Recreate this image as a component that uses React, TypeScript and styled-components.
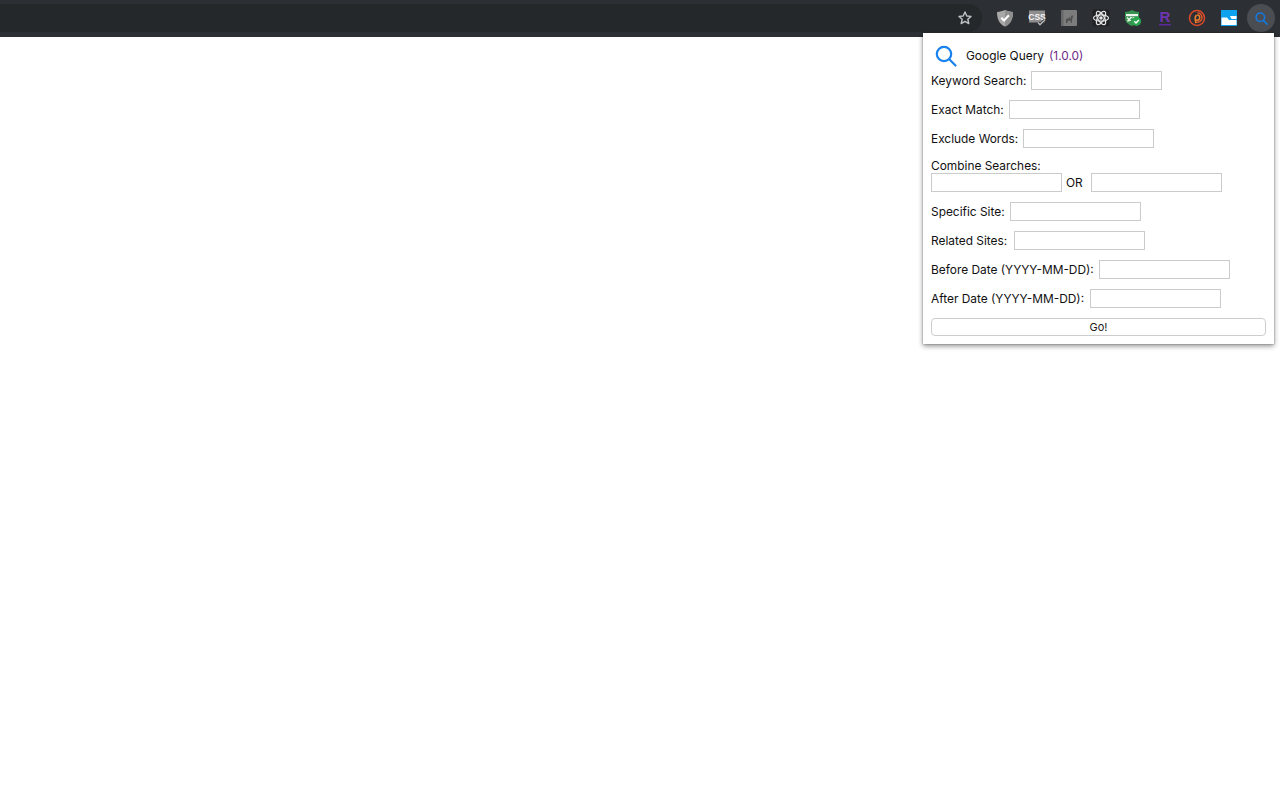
import React from "react";
import styled, { createGlobalStyle } from "styled-components";

const Global = createGlobalStyle`
  html, body { margin: 0; padding: 0; background: #fff; height: 100%; }
  #root { min-height: 100%; }
`;
const Page = styled.div`
  position: relative;
  width: 1280px;
  height: 800px;
  overflow: hidden;
  background: #fff;
  font-family: "Inter", "Liberation Sans", sans-serif;
`;
const Toolbar = styled.div`
  display: flex;
  align-items: center;
  height: 37px;
  box-sizing: border-box;
  padding: 4px 5px 5px 0;
  background: #2c2f33;
`;
const Omnibox = styled.div`
  flex: 1;
  height: 28px;
  margin-right: 9px;
  padding-right: 9px;
  display: flex;
  align-items: center;
  justify-content: flex-end;
  background: #24282b;
  border-radius: 0 14px 14px 0;
`;
const Icons = styled.div`
  display: flex;
  gap: 4px;
`;
const IconButton = styled.div<{ $active?: boolean }>`
  width: 28px;
  height: 28px;
  border-radius: 50%;
  display: flex;
  align-items: center;
  justify-content: center;
  background: ${(p) => (p.$active ? "#4a4d51" : "transparent")};
`;
const Popup = styled.div`
  position: absolute;
  left: 923px;
  top: 33px;
  width: 351px;
  height: 311px;
  box-sizing: border-box;
  padding: 12px 8px 8px;
  background: #fff;
  box-shadow: 0 0 1px rgba(0, 0, 0, 0.5), 0 2px 5px rgba(0, 0, 0, 0.45);
  color: #111;
  font-size: 11.9px;
`;
const Header = styled.div`
  display: flex;
  align-items: center;
  height: 22px;
  margin-bottom: 4px;
  padding-left: 4px;
`;
const Title = styled.span`
  margin-left: 9px;
  margin-top: -1px;
  width: 78px;
  white-space: nowrap;
`;
const Version = styled.span`
  margin-left: 5px;
  margin-top: -1px;
  color: #6f2a87;
`;
const Row = styled.div`
  display: flex;
  align-items: center;
  gap: 5px;
  height: 19px;
  margin-bottom: 10px;
`;
const StackLabel = styled.div`
  height: 15px;
  line-height: 15px;
`;
const Label = styled.label<{ $w: number }>`
  width: ${(p) => p.$w}px;
  white-space: nowrap;
`;
const Field = styled.input`
  box-sizing: border-box;
  width: 131px;
  height: 19px;
  padding: 0 2px;
  margin: 0;
  border: 1px solid #cbcbcb;
  border-radius: 0;
  background: #fff;
  outline: none;
`;
const Or = styled.span`
  width: 17px;
  margin: 0 3px 0 -1px;
`;
const Go = styled.button`
  display: block;
  width: 335px;
  height: 18px;
  padding: 0;
  box-sizing: border-box;
  border: 1px solid #cdcdcd;
  border-radius: 4px;
  background: #fff;
  color: #222;
  font-family: inherit;
  font-size: 11px;
  line-height: 16px;
`;

const Star = () => (
  <svg width="16" height="16" viewBox="0 0 24 24" fill="none" stroke="#bfc2c6" strokeWidth="2.100" strokeLinejoin="round">
    <path d="M12 3l2.700 6 6.300.6-4.800 4.300 1.500 6.400L12 17l-5.700 3.300 1.500-6.400L3 9.600 9.300 9z" />
  </svg>
);
const Shield = () => (
  <svg width="18" height="18" viewBox="0 0 18 18">
    <path d="M9 1c2.500 1.200 5.200 1.800 8 1.900 0 6.500-1.800 11.600-8 14.600C2.800 14.500 1 9.400 1 2.900 3.800 2.800 6.500 2.200 9 1z" fill="#a8a8a8" />
    <path d="M9 1c2.500 1.200 5.200 1.800 8 1.900 0 6.500-1.800 11.600-8 14.600z" fill="#8f8f8f" />
    <path d="M5.300 8.800l2.700 2.700 4.900-5.200" fill="none" stroke="#fff" strokeWidth="2" />
  </svg>
);
const CssIcon = () => (
  <svg width="18" height="18" viewBox="0 0 18 18">
    <rect x="1" y="1.500" width="16" height="12" fill="#8e8e8e" />
    <text x="9" y="10.800" textAnchor="middle" fontSize="8.500" fontWeight="700" fontFamily="Liberation Sans" fill="#f4f4f4">CSS</text>
    <path d="M10 13.500l2 2.200 5-5" fill="none" stroke="#2c2f33" strokeWidth="2.800" />
    <path d="M10 13.500l2 2.200 5-5" fill="none" stroke="#bdbdbd" strokeWidth="1.400" />
  </svg>
);
const CamelBook = () => (
  <svg width="18" height="18" viewBox="0 0 18 18">
    <rect x="1" y="1" width="16" height="16" rx="1" fill="#7c7c7c" />
    <rect x="1" y="1" width="2.500" height="16" fill="#686868" />
    <path d="M6 14v-3.500l1.200-1.600 1 1.300 1-2.400 1.300 2 .6-3 2.400-.2-.9 1.800-.7 3.400V14h-1l-.2-2.300H7.600V14z" fill="#505050" />
  </svg>
);
const Atom = () => (
  <svg width="18" height="18" viewBox="0 0 18 18">
    <rect x="0.500" y="0.500" width="17" height="17" rx="2" fill="#202326" />
    <g fill="none" stroke="#e4e4e4" strokeWidth="1.200">
      <ellipse cx="9" cy="9" rx="7.500" ry="3.200" />
      <ellipse cx="9" cy="9" rx="7.500" ry="3.200" transform="rotate(60 9 9)" />
      <ellipse cx="9" cy="9" rx="7.500" ry="3.200" transform="rotate(120 9 9)" />
    </g>
    <circle cx="9" cy="9" r="1.800" fill="#e4e4e4" />
  </svg>
);
const GreenBadge = () => (
  <svg width="18" height="18" viewBox="0 0 18 18">
    <path d="M1 3c2.500 0 5-.7 7-2 2 1.300 4.500 2 7 2v6c0 4-3 6.500-7 8-4-1.500-7-4-7-8z" fill="#37914f" />
    <rect x="2" y="5" width="12" height="2.200" fill="#eef5ee" />
    <path d="M3 8.500l3.500 3.500M7.500 8l-4 4.500M8.500 8.500l2.500.8" stroke="#e6f1e6" strokeWidth="1.700" fill="none" />
    <circle cx="12.500" cy="12.300" r="4.600" fill="#2aa650" />
    <path d="M10.300 12.300l1.700 1.700 2.800-3" fill="none" stroke="#fff" strokeWidth="1.400" />
  </svg>
);
const RIcon = () => (
  <svg width="18" height="18" viewBox="0 0 18 18">
    <text x="9" y="13" textAnchor="middle" fontSize="15" fontWeight="700" fontFamily="Liberation Sans" fill="#6f35b0">R</text>
    <rect x="3" y="15" width="12" height="1.500" fill="#5a2a9c" />
  </svg>
);
const Spiral = () => (
  <svg width="18" height="18" viewBox="0 0 18 18" fill="none" strokeWidth="1.500" strokeLinecap="round">
    <circle cx="9" cy="9" r="7.500" stroke="#dc4a2a" />
    <path d="M10 3.800c3.200.6 4.500 3.500 3.800 6-.8 2.500-3.400 4-5.600 3.300" stroke="#e0552a" />
    <path d="M9.500 6c2 .2 2.600 2.200 2 3.700-.5 1.300-1.800 1.800-2.800 1.200M8 6.500C6.800 8.500 7 11 7.800 13.500" stroke="#f0812d" />
  </svg>
);
const FolderTile = () => (
  <svg width="18" height="18" viewBox="0 0 18 18">
    <rect x="1" y="1" width="16" height="16" fill="#0ca2ee" />
    <path d="M1.500 16V8.500H7l2 2.500h7.500v5z" fill="#fff" />
    <path d="M10 7h6.500v3h-5z" fill="#fff" />
  </svg>
);
const SearchIcon = ({ size, stroke, width }: { size: number; stroke: string; width: number }) => (
  <svg width={size} height={size} viewBox="0 0 22 22" fill="none" stroke={stroke} strokeWidth={width} strokeLinecap="round">
    <circle cx="9" cy="9" r="7.200" />
    <path d="M14.300 14.300L20.500 20.500" />
  </svg>
);

const upper: [string, number][] = [
  ["Keyword Search:", 95],
  ["Exact Match:", 73],
  ["Exclude Words:", 87],
];
const lower: [string, number][] = [
  ["Specific Site:", 74],
  ["Related Sites:", 78],
  ["Before Date (YYYY-MM-DD):", 163],
  ["After Date (YYYY-MM-DD):", 154],
];

export default function App() {
  return (
    <Page>
      <Global />
      <Toolbar>
        <Omnibox>
          <Star />
        </Omnibox>
        <Icons>
          <IconButton><Shield /></IconButton>
          <IconButton><CssIcon /></IconButton>
          <IconButton><CamelBook /></IconButton>
          <IconButton><Atom /></IconButton>
          <IconButton><GreenBadge /></IconButton>
          <IconButton><RIcon /></IconButton>
          <IconButton><Spiral /></IconButton>
          <IconButton><FolderTile /></IconButton>
          <IconButton $active><SearchIcon size={13} stroke="#1479e0" width={2.600} /></IconButton>
        </Icons>
      </Toolbar>
      <Popup>
        <Header>
          <SearchIcon size={22} stroke="#1a82ee" width={2.200} />
          <Title>Google Query</Title>
          <Version>(1.0.0)</Version>
        </Header>
        {upper.map(([l, w]) => (
          <Row key={l}>
            <Label $w={w}>{l}</Label>
            <Field />
          </Row>
        ))}
        <StackLabel>Combine Searches:</StackLabel>
        <Row>
          <Field />
          <Or>OR</Or>
          <Field />
        </Row>
        {lower.map(([l, w]) => (
          <Row key={l}>
            <Label $w={w}>{l}</Label>
            <Field />
          </Row>
        ))}
        <Go>Go!</Go>
      </Popup>
    </Page>
  );
}
